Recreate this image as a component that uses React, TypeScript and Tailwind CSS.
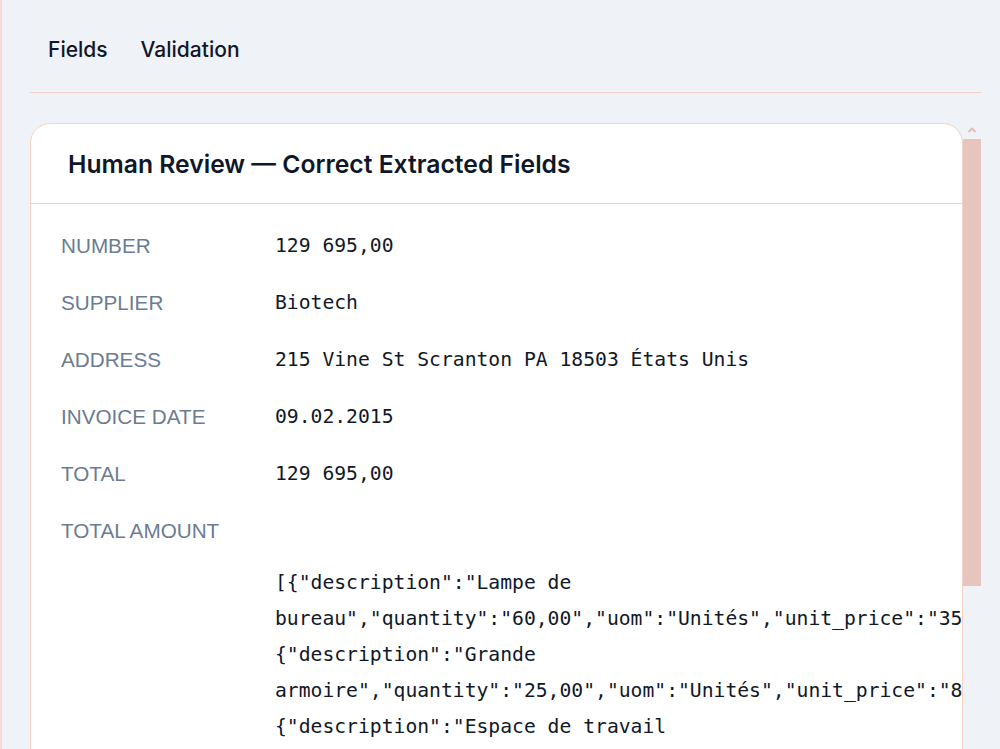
const fields: { label: string; value: string }[] = [
  { label: "NUMBER", value: "129 695,00" },
  { label: "SUPPLIER", value: "Biotech" },
  { label: "ADDRESS", value: "215 Vine St Scranton PA 18503 États Unis" },
  { label: "INVOICE DATE", value: "09.02.2015" },
  { label: "TOTAL", value: "129 695,00" },
  { label: "TOTAL AMOUNT", value: "" },
]

const lines = [
  { description: "Lampe de bureau", quantity: "60,00", uom: "Unités", unit_price: "35,00", subtotal: "2100,00" },
  { description: "Grande armoire", quantity: "25,00", uom: "Unités", unit_price: "800,00", subtotal: "20000,00" },
  { description: "Espace de travail modulaire", quantity: "35,00", uom: "Unités", unit_price: "3074,14", subtotal: "107595,00" },
]

// headless chrome hides native scrollbars, so this one is drawn
function Scrollbar() {
  return (
    <div className="flex w-[18px] shrink-0 flex-col">
      <div className="flex h-[16px] items-center justify-center pb-[2px]">
        <svg width="10" height="6" viewBox="0 0 10 6" fill="none">
          <path d="M1.5 5 L5 1.5 L8.5 5" stroke="#e3bcae" strokeWidth="1.8" />
        </svg>
      </div>
      <div className="h-[447px] bg-[#e6c6bc]" />
    </div>
  )
}

export default function App() {
  const json = JSON.stringify(lines)

  return (
    <div className="flex h-screen flex-col overflow-hidden border-l-2 border-[#f5dcd5] bg-[#eff2f7] pl-[28px] pr-[19px] font-['Inter',sans-serif]">
      <nav className="flex h-[93px] shrink-0 items-center gap-[33px] border-b border-[#f3cfc4] pl-[18px] pt-[8px] text-[21px] font-medium text-[#0f172a]">
        <button type="button">Fields</button>
        <button type="button">Validation</button>
      </nav>

      <div className="mt-[30px] flex min-h-0 flex-1 overflow-hidden">
        <section className="min-w-0 flex-1 self-start overflow-hidden rounded-[20px] border border-[#f5d0c4] bg-white">
          <header className="flex h-[80px] items-center border-b border-[#f5d0c4] px-[37px] pt-[3px]">
            <h2 className="text-[24.7px] font-semibold text-[#0f172a]">
              Human Review — Correct Extracted Fields
            </h2>
          </header>

          <div className="px-[30px] pb-[60px] pt-[13px]">
            {fields.map((f) => (
              <div key={f.label} className="grid h-[57px] grid-cols-[214px_1fr] items-center">
                <span className="font-['Liberation_Sans',Arial,sans-serif] text-[20.7px] text-[#6b7b91]">
                  {f.label}
                </span>
                <span className="font-['DejaVu_Sans_Mono',monospace] text-[19.7px] text-[#111827]">
                  {f.value}
                </span>
              </div>
            ))}
            <div className="mt-[6px] grid grid-cols-[214px_1fr]">
              <span />
              <p className="font-['DejaVu_Sans_Mono',monospace] text-[19.7px] leading-[36px] text-[#111827]">
                {json.replace(/},{/g, "}, {").split(", ").map((part, i, arr) => (
                  <span key={i} className="block">
                    {part}
                    {i < arr.length - 1 ? "," : ""}
                  </span>
                ))}
              </p>
            </div>
          </div>
        </section>
        <Scrollbar />
      </div>
    </div>
  )
}
